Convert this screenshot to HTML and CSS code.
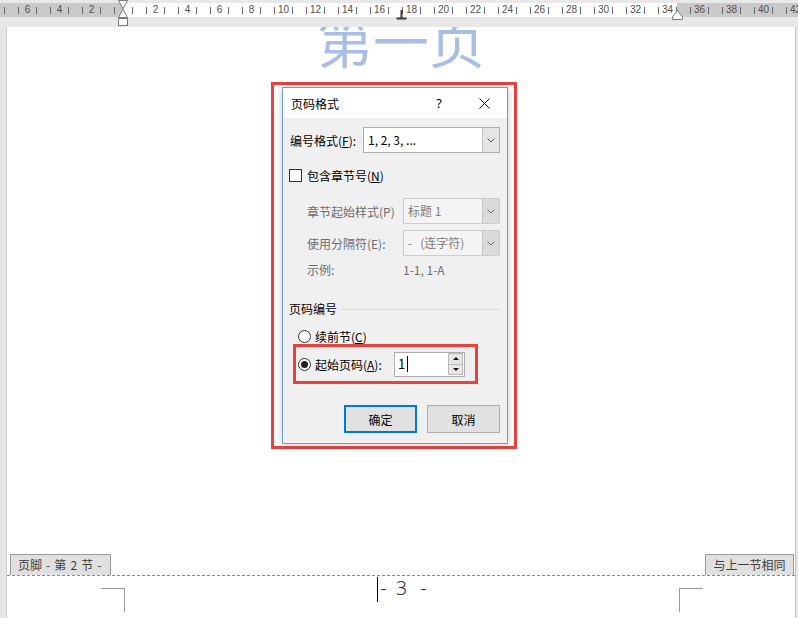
FILE: index.html
```html
<!DOCTYPE html>
<html lang="zh-CN">
<head>
<meta charset="utf-8">
<title>页码格式</title>
<link rel="stylesheet" href="styles.css">
</head>
<body>
<div class="app">
  <div class="ruler-band">
    <div class="ruler">
      <span class="cell"><i></i><b>8</b><i></i></span>
      <span class="cell"><i></i><b>6</b><i></i></span>
      <span class="cell"><i></i><b>4</b><i></i></span>
      <span class="cell"><i></i><b>2</b><i></i></span>
      <span class="cell"><i></i><b></b><i></i></span>
      <span class="cell"><i></i><b>2</b><i></i></span>
      <span class="cell"><i></i><b>4</b><i></i></span>
      <span class="cell"><i></i><b>6</b><i></i></span>
      <span class="cell"><i></i><b>8</b><i></i></span>
      <span class="cell"><i></i><b>10</b><i></i></span>
      <span class="cell"><i></i><b>12</b><i></i></span>
      <span class="cell"><i></i><b>14</b><i></i></span>
      <span class="cell"><i></i><b>16</b><i></i></span>
      <span class="cell"><i></i><b>18</b><i></i></span>
      <span class="cell"><i></i><b>20</b><i></i></span>
      <span class="cell"><i></i><b>22</b><i></i></span>
      <span class="cell"><i></i><b>24</b><i></i></span>
      <span class="cell"><i></i><b>26</b><i></i></span>
      <span class="cell"><i></i><b>28</b><i></i></span>
      <span class="cell"><i></i><b>30</b><i></i></span>
      <span class="cell"><i></i><b>32</b><i></i></span>
      <span class="cell"><i></i><b>34</b><i></i></span>
      <span class="cell"><i></i><b>36</b><i></i></span>
      <span class="cell"><i></i><b>38</b><i></i></span>
      <span class="cell"><i></i><b>40</b><i></i></span>
      <span class="cell"><i></i><b>42</b><i></i></span>
    </div>
    <svg class="mk mk-left" width="12" height="27" viewBox="0 0 12 27">
      <path d="M1.5 0.5H10.5L6 8.8Z" fill="#fff" stroke="#7a7a7a"/>
      <path d="M6 9.2L10.5 17.5H1.5Z" fill="#fff" stroke="#7a7a7a"/>
      <rect x="1.5" y="18.5" width="9" height="7" fill="#fff" stroke="#7a7a7a"/>
    </svg>
    <svg class="mk mk-tab" width="11" height="10" viewBox="0 0 11 10">
      <path d="M5.5 0V8.5M0.5 8.5H10.5" stroke="#3a3a3a" stroke-width="2" fill="none"/>
    </svg>
    <svg class="mk mk-right" width="13" height="21" viewBox="0 0 13 21">
      <path d="M1.5 19.5V17L6.5 10.5L11.5 17V19.5Z" fill="#fff" stroke="#7a7a7a"/>
    </svg>
  </div>

  <div class="workspace">
    <div class="strip-left"></div>
    <div class="page">
      <div class="heading">第一页</div>
      <div class="spacer"></div>
      <div class="footer-head">
        <span class="tag tag-l">页脚 - 第 2 节 -</span>
        <span class="tag tag-r">与上一节相同</span>
      </div>
      <div class="footer-body">
        <span class="corner corner-l"></span>
        <span class="pagenum"><span class="caret"></span><span class="pn-dash">-</span><span class="pn-num">3</span><span class="pn-dash pn-dash2">-</span></span>
        <span class="corner corner-r"></span>
      </div>
    </div>
    <div class="strip-right"></div>
  </div>

  <div class="callout">
    <div class="dialog">
      <div class="titlebar">
        <span class="dlg-title">页码格式</span>
        <span class="tb-help">?</span>
        <span class="tb-close"><svg width="11" height="11" viewBox="0 0 11 11"><path d="M0.5 0.5L10.5 10.5M10.5 0.5L0.5 10.5" stroke="#111" stroke-width="1" fill="none"/></svg></span>
      </div>
      <div class="dlg-body">
        <div class="field">
          <span class="lbl lbl-w1">编号格式(<u>F</u>):</span>
          <div class="combo combo-w1">
            <span class="combo-text">1, 2, 3, ...</span>
            <span class="combo-btn"><svg width="8" height="5" viewBox="0 0 8 5"><path d="M0.5 0.5L4 4L7.5 0.5" stroke="#505050" fill="none"/></svg></span>
          </div>
        </div>

        <div class="check-row">
          <span class="checkbox"></span>
          <span>包含章节号(<u>N</u>)</span>
        </div>

        <div class="field sub gap-first">
          <span class="lbl lbl-w2 dim">章节起始样式(P)</span>
          <div class="combo combo-w2 is-disabled">
            <span class="combo-text">标题 1</span>
            <span class="combo-btn"><svg width="8" height="5" viewBox="0 0 8 5"><path d="M0.5 0.5L4 4L7.5 0.5" stroke="#6a6a6a" fill="none"/></svg></span>
          </div>
        </div>

        <div class="field sub gap-second">
          <span class="lbl lbl-w2 dim">使用分隔符(E):</span>
          <div class="combo combo-w2 is-disabled">
            <span class="combo-text">-&nbsp;&nbsp;&nbsp;(连字符)</span>
            <span class="combo-btn"><svg width="8" height="5" viewBox="0 0 8 5"><path d="M0.5 0.5L4 4L7.5 0.5" stroke="#6a6a6a" fill="none"/></svg></span>
          </div>
        </div>

        <div class="text-row sub">
          <span class="lbl lbl-w2 dim">示例:</span>
          <span class="dim">1-1, 1-A</span>
        </div>

        <div class="group-head">
          <span>页码编号</span>
          <span class="group-line"></span>
        </div>

        <div class="radio-row">
          <span class="radio"></span>
          <span>续前节(<u>C</u>)</span>
        </div>

        <div class="highlight">
          <span class="radio checked"></span>
          <span class="lbl-start">起始页码(<u>A</u>):</span>
          <div class="spin">
            <span class="spin-val">1</span>
            <span class="spin-caret"></span>
            <span class="spin-btns"><span class="sb sb-up"></span><span class="sb sb-down"></span></span>
          </div>
        </div>

        <div class="buttons">
          <span class="btn btn-default">确定</span>
          <span class="btn">取消</span>
        </div>
      </div>
    </div>
  </div>
</div>
</body>
</html>
```

FILE: styles.css
```css
* { box-sizing: border-box; margin: 0; padding: 0; }
html, body { width: 798px; height: 618px; overflow: hidden; }
body {
  background: #e6e6e6;
  font-family: "Noto Sans CJK SC", "Noto Sans", sans-serif;
  font-size: 12px;
  color: #000;
}
u { text-decoration: underline; text-underline-offset: 1px; }

.app {
  position: relative;
  width: 798px;
  height: 618px;
  overflow: hidden;
  display: flex;
  flex-direction: column;
}

/* ruler */
.ruler-band {
  position: relative;
  flex: none;
  height: 27px;
  background: #e8e8e8;
  overflow: hidden;
}
.ruler {
  display: flex;
  width: max-content;
  height: 14px;
  margin-top: 3px;
  margin-left: -21px;
  background: linear-gradient(to right, #c9c9c9 144px, #fff 144px, #fff 698px, #c9c9c9 698px);
}
.cell {
  flex: none;
  width: 32px;
  height: 14px;
  padding-left: 7px;
  display: grid;
  grid-template-columns: 1px 17px 1px;
  align-items: center;
  font: 10px/14px "Liberation Sans", Arial, sans-serif;
  color: #505050;
  text-align: center;
}
.cell i { display: block; height: 7px; background: #6a6a6a; }
.cell b { font-weight: normal; }
.mk { position: absolute; }
.mk-left { left: 117px; top: 0; }
.mk-tab { left: 396px; top: 10px; }
.mk-right { left: 671px; top: 0; }

/* workspace */
.workspace { flex: 1; display: flex; min-height: 0; }
.strip-left { width: 7px; flex: none; background: #e6e6e6; border-right: 1px solid #d0d0d0; }
.strip-right { width: 3px; flex: none; background: #e6e6e6; border-left: 1px solid #c4c4c4; }
.page {
  flex: 1;
  background: #fff;
  display: flex;
  flex-direction: column;
  overflow: hidden;
}
.heading {
  flex: none;
  margin-top: -16px;
  font-size: 56px;
  line-height: 56px;
  text-align: center;
  color: #a8bee4;
}
.spacer { flex: 1; }
.footer-head {
  flex: none;
  display: flex;
  justify-content: space-between;
  align-items: flex-end;
  padding: 0 1px 0 3px;
}
.tag {
  height: 21px;
  line-height: 20px;
  padding: 0 7px;
  background: #e0e0e0;
  border: 1px solid #9c9c9c;
  border-bottom: none;
  color: #3c3c3c;
  font-size: 12px;
  white-space: pre;
}
.tag-l { width: 101px; word-spacing: 1.4px; }
.tag-r { width: 89px; text-align: center; padding: 0; }
.footer-body {
  flex: none;
  height: 43px;
  border-top: 1px dashed #8a8a8a;
  display: flex;
  justify-content: space-between;
  padding: 0 92px 0 94px;
}
.corner {
  width: 24px;
  height: 24px;
  margin-top: 12px;
  border-top: 1px solid #9a9a9a;
}
.corner-l { border-right: 1px solid #9a9a9a; }
.corner-r { border-left: 1px solid #9a9a9a; }
.pagenum {
  display: flex;
  align-items: flex-start;
  margin-top: 1px;
  height: 25px;
  font-family: "Noto Sans", sans-serif;
  font-weight: 300;
  font-size: 20px;
  line-height: 21px;
  color: #333;
}
.caret { width: 1px; height: 25px; background: #000; }
.pn-dash { margin-left: 2px; }
.pn-num { margin-left: 9px; }
.pn-dash2 { margin-left: 13px; }

/* dialog */
.callout {
  position: absolute;
  left: 271px;
  top: 82px;
  width: 246px;
  height: 367px;
  border: 3px solid #e8423f;
  padding: 2px 6px 2px 8px;
}
.dialog {
  width: 226px;
  height: 357px;
  border: 1px solid #6b9fd3;
  background: #f0f0f0;
  box-shadow: 0 0 7px rgba(0, 0, 0, 0.22);
  display: flex;
  flex-direction: column;
}
.titlebar {
  flex: none;
  height: 30px;
  background: #fff;
  display: flex;
  align-items: center;
  padding-left: 8px;
}
.dlg-title { flex: 1; font-size: 12px; }
.tb-help {
  width: 30px;
  text-align: center;
  font-family: "Noto Sans", sans-serif;
  font-size: 13px;
}
.tb-close {
  width: 46px;
  margin-left: 7px;
  height: 30px;
  display: flex;
  align-items: center;
  justify-content: center;
}
.dlg-body {
  flex: 1;
  padding: 9px 7px 10px 7px;
  display: flex;
  flex-direction: column;
}
.field { display: flex; align-items: center; height: 26px; flex: none; }
.sub { padding-left: 17px; }
.gap-first { margin-top: 14px; }
.gap-second { margin-top: 6px; }
.lbl { flex: none; white-space: nowrap; }
.lbl-w1 { width: 73px; }
.lbl-w2 { width: 96px; }
.dim { color: #6d6d6d; }
.combo {
  height: 26px;
  border: 1px solid #acacac;
  background: #fff;
  display: flex;
  align-items: stretch;
}
.combo-w1 { width: 137px; }
.combo-w2 { width: 97px; }
.combo-text {
  flex: 1;
  padding-left: 4px;
  line-height: 24px;
  white-space: nowrap;
}
.combo-btn {
  width: 17px;
  background: #e5e5e5;
  border-left: 1px solid #c2c2c2;
  display: flex;
  align-items: center;
  justify-content: center;
}
.is-disabled { background: #f4f4f4; border-color: #cdcdcd; color: #7d7d7d; }
.is-disabled .combo-btn { background: #dadada; border-left-color: #c4c4c4; }

.check-row {
  flex: none;
  margin-top: 13px;
  margin-left: -1px;
  height: 18px;
  display: flex;
  align-items: center;
  gap: 5px;
}
.checkbox { width: 13px; height: 13px; border: 1px solid #333; background: #fff; }

.text-row { flex: none; margin-top: 5px; height: 16px; display: flex; align-items: center; }

.group-head {
  flex: none;
  margin-top: 23px;
  height: 16px;
  display: flex;
  align-items: center;
  margin-left: -1px;
}
.group-line { flex: 1; height: 1px; background: #dcdcdc; margin-left: 5px; margin-top: 2px; }

.radio-row {
  flex: none;
  margin-top: 12px;
  height: 16px;
  margin-left: 8px;
  display: flex;
  align-items: center;
  gap: 4px;
}
.radio {
  flex: none;
  width: 13px;
  height: 13px;
  border: 1px solid #333;
  border-radius: 50%;
  background: #fff;
  display: flex;
  align-items: center;
  justify-content: center;
}
.radio.checked::after {
  content: "";
  width: 7px;
  height: 7px;
  border-radius: 50%;
  background: #222;
}

.highlight {
  flex: none;
  margin-left: 3px;
  width: 185px;
  height: 40px;
  border: 3px solid #e8423f;
  padding-left: 2px;
  display: flex;
  align-items: center;
}
.highlight .radio { margin-right: 4px; }
.lbl-start { width: 79px; white-space: nowrap; }
.spin {
  width: 71px;
  height: 25px;
  border: 1px solid #abadb3;
  background: #fff;
  display: flex;
  align-items: center;
  padding-left: 3px;
}
.spin-val { font-size: 13px; line-height: 16px; }
.spin-caret { width: 1px; height: 16px; background: #000; margin-left: 2px; }
.spin-btns {
  margin-left: auto;
  margin-right: 1px;
  width: 15px;
  height: 22px;
  display: flex;
  flex-direction: column;
}
.sb {
  flex: 1;
  background: #e7e7e7;
  border: 1px solid #b9b9b9;
  display: flex;
  align-items: center;
  justify-content: center;
}
.sb-down { border-top: none; }
.sb-up::after {
  content: "";
  border-left: 3px solid transparent;
  border-right: 3px solid transparent;
  border-bottom: 3px solid #111;
}
.sb-down::after {
  content: "";
  border-left: 3px solid transparent;
  border-right: 3px solid transparent;
  border-top: 3px solid #111;
}

.buttons {
  flex: none;
  margin-top: 21px;
  display: flex;
  justify-content: flex-end;
  gap: 10px;
}
.btn {
  width: 73px;
  height: 28px;
  background: #e1e1e1;
  border: 1px solid #adadad;
  display: flex;
  align-items: center;
  justify-content: center;
}
.btn-default { border: 2px solid #0078d7; }
```
